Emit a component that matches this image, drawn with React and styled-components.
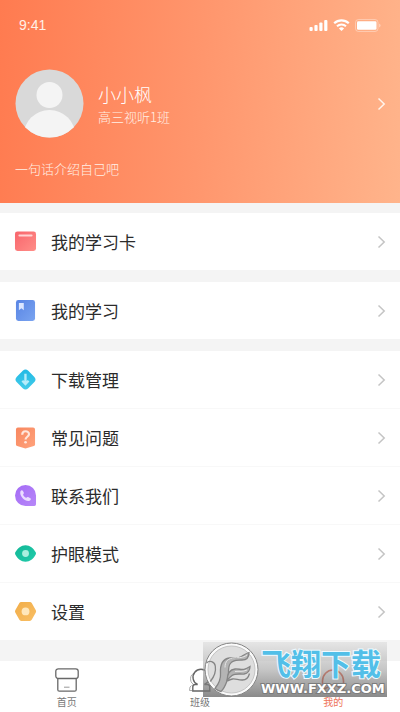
import React from "react";
import styled, { createGlobalStyle, ThemeProvider } from "styled-components";

const theme = {
  palette: {
    page: "#f4f4f4",
    surface: "#ffffff",
    text: "#2b2b2b",
    muted: "#777777",
    divider: "#f8f8f8",
    chevron: "#c4c4c4",
    accent: "#ee7358",
  },
};

const GlobalStyle = createGlobalStyle`
  * {
    box-sizing: border-box;
  }
  body {
    margin: 0;
    background-color: ${theme.palette.page};
    font-family: "Noto Sans CJK SC", sans-serif;
  }
  h1, p, ul {
    margin: 0;
    padding: 0;
  }
`;

const Page = styled.div`
  display: flex;
  flex-direction: column;
  min-height: 100vh;
`;

const Header = styled.header`
  display: flex;
  flex-direction: column;
  padding-bottom: 24px;
  color: #fff0e6;
  background: linear-gradient(94deg, #ff7b50 0%, #ff966d 50%, #ffb48b 100%);
`;

const StatusBar = styled.div`
  display: flex;
  align-items: center;
  justify-content: space-between;
  height: 50px;
  padding: 0 19px;
  font-family: "Liberation Sans", sans-serif;
  font-size: 14px;
`;

const StatusIcons = styled.div`
  display: flex;
  align-items: center;
  gap: 5px;
`;

const Profile = styled.a`
  display: flex;
  align-items: center;
  gap: 14px;
  margin-top: 19px;
  padding: 0 14px 0 15px;
  color: inherit;
  text-decoration: none;
`;

const ProfileText = styled.div`
  flex: 1;
`;

const Name = styled.h1`
  font-size: 18px;
  line-height: 26px;
  font-weight: 300;
  color: #ffffff;
`;

const Small = styled.p`
  font-size: 13px;
  line-height: 20px;
  font-weight: 300;
`;

const Bio = styled(Small)`
  margin-top: 21px;
  padding: 0 15px;
`;

const Main = styled.main`
  display: flex;
  flex: 1;
  flex-direction: column;
  gap: 12px;
  padding: 10px 0 21px;
`;

const Group = styled.ul`
  list-style: none;
  background-color: ${({ theme }) => theme.palette.surface};
`;

const Item = styled.li`
  & + & {
    border-top: 1px solid ${({ theme }) => theme.palette.divider};
  }
`;

const RowLink = styled.a`
  display: flex;
  align-items: center;
  gap: 14px;
  height: 57px;
  padding: 0 14px;
  font-size: 17px;
  line-height: 24px;
  color: ${({ theme }) => theme.palette.text};
  text-decoration: none;
`;

const RowLabel = styled.span`
  flex: 1;
`;

const TabBar = styled.nav`
  position: relative;
  display: flex;
  background-color: ${({ theme }) => theme.palette.surface};
`;

const Tab = styled.a`
  display: flex;
  flex: 1;
  flex-direction: column;
  align-items: center;
  gap: 3px;
  padding: 7px 0 3px;
  font-size: 10px;
  line-height: 14px;
  color: ${({ $active, theme }) =>
    $active ? theme.palette.accent : theme.palette.muted};
  text-decoration: none;
`;

// Download site badge lying over the tab bar
const Badge = styled.div`
  position: absolute;
  right: 13px;
  bottom: 15px;
  display: flex;
  align-items: center;
  width: 184px;
  height: 55px;
  background: linear-gradient(
    180deg,
    rgba(215, 215, 215, 0.5) 0%,
    rgba(160, 160, 160, 0.6) 50%,
    rgba(105, 105, 105, 0.78) 100%
  );
  pointer-events: none;
`;

const BadgeText = styled.div`
  display: flex;
  flex-direction: column;
  white-space: nowrap;
`;

const BadgeTitle = styled.span`
  font-size: 30px;
  line-height: 38px;
  font-weight: 700;
  color: #52bfe8;
  paint-order: stroke fill;
  -webkit-text-stroke: 2px #effaff;
`;

const BadgeUrl = styled.span`
  font-family: "DejaVu Sans", sans-serif;
  font-size: 13px;
  line-height: 16px;
  font-weight: 700;
  color: #ffffff;
  paint-order: stroke fill;
  -webkit-text-stroke: 2px #7c7c7c;
`;

const Chevron = ({ color = theme.palette.chevron }) => (
  <svg width="9" height="14" viewBox="0 0 9 14" fill="none" aria-hidden="true">
    <path d="M1.5 1.5 7.2 7 1.5 12.5" stroke={color} strokeWidth="1.5" />
  </svg>
);

const Avatar = () => (
  <svg width="69" height="69" viewBox="0 0 69 69" role="img" aria-label="头像">
    <defs>
      <clipPath id="avatar">
        <circle cx="34.5" cy="34.5" r="34" />
      </clipPath>
    </defs>
    <circle cx="34.5" cy="34.5" r="34" fill="#d9d9d9" />
    <circle cx="34.5" cy="26" r="13" fill="#f4f4f4" />
    <circle cx="34.5" cy="67" r="26" fill="#f4f4f4" clipPath="url(#avatar)" />
  </svg>
);

const Signal = () => (
  <svg width="19" height="12" viewBox="0 0 19 12" fill="#fff" aria-hidden="true">
    <rect x="0.5" y="8" width="3.2" height="4" rx="1" />
    <rect x="5.4" y="6" width="3.2" height="6" rx="1" />
    <rect x="10.3" y="3.5" width="3.2" height="8.5" rx="1" />
    <rect x="15.2" y="1" width="3.2" height="11" rx="1" />
  </svg>
);

const Wifi = () => (
  <svg width="17" height="12" viewBox="0 0 17 12" fill="none" aria-hidden="true">
    <path d="M1.2 4.3a10.5 10.5 0 0 1 14.6 0" stroke="#fff" strokeWidth="2.2" />
    <path d="M4 7.3a6.5 6.5 0 0 1 9 0" stroke="#fff" strokeWidth="2" />
    <path d="M8.5 12 5.9 9.5a3.8 3.8 0 0 1 5.2 0Z" fill="#fff" />
  </svg>
);

const Battery = () => (
  <svg width="26" height="13" viewBox="0 0 26 13" aria-hidden="true">
    <rect
      x="0.5"
      y="0.5"
      width="22.5"
      height="12"
      rx="3"
      fill="none"
      stroke="#fff"
      strokeOpacity="0.35"
    />
    <rect x="2" y="2.3" width="19.5" height="8.4" rx="1.3" fill="#fff" />
    <path d="M24.2 4.5v4a2.2 2.2 0 0 0 0-4Z" fill="#fff" fillOpacity="0.45" />
  </svg>
);

const icons = {
  card: (
    <>
      <rect x="1" y="1.5" width="21.5" height="20" rx="2.5" fill="url(#red)" />
      <rect x="4.5" y="4.5" width="14.5" height="2.2" rx="1" fill="#ffd3d3" />
    </>
  ),
  book: (
    <>
      <rect x="2" y="1" width="19.5" height="21.5" rx="2.5" fill="url(#blue)" />
      <path d="M5 4h5v7.5L7.5 9.5 5 11.5Z" fill="#dbe6ff" />
    </>
  ),
  download: (
    <>
      <rect
        x="3.5"
        y="3.5"
        width="16.5"
        height="16.5"
        rx="4"
        transform="rotate(45 11.75 11.75)"
        fill="url(#cyan)"
      />
      <path
        d="M11.7 6v10M8.5 13l3.2 3.3 3.2-3.300"
        fill="none"
        stroke="#b5ecfa"
        strokeWidth="2.4"
      />
    </>
  ),
  question: (
    <>
      <path
        d="M4 1.5h15.5a2 2 0 0 1 2 2v15.3q0 1.200-1.200 1.600l-8.600 2.600-8.500-2.600Q2 20 2 18.800V3.500a2 2 0 0 1 2-2Z"
        fill="url(#orange)"
      />
      <path
        d="M8.400 8.900c0-4.700 6.900-4.500 6.900-.5 0 2.600-3.500 2.600-3.500 5.300"
        fill="none"
        stroke="#ffe6dc"
        strokeWidth="2.200"
      />
      <circle cx="11.800" cy="16.600" r="1.400" fill="#ffe6dc" />
    </>
  ),
  phone: (
    <>
      <path
        d="M11.8 1a10.700 10.700 0 0 1 10.700 10.700v9.100q0 1.700-1.700 1.700h-9A10.700 10.700 0 0 1 11.800 1Z"
        fill="url(#purple)"
      />
      <path
        d="M6.600 7.500c.5-1.100 1.800-1.500 2.400-.5l1 1.700c.5 1-.8 1.500-.7 2.400.5 1.400 1.600 2.500 3 3 .9.300 1.500-1.100 2.500-.6l1.900 1.100c1.100.7.400 2-.7 2.400-2.300.8-4.900-.3-6.900-2.300s-3.400-4.800-2.500-7.200Z"
        fill="#eadcff"
      />
    </>
  ),
  eye: (
    <>
      <path
        d="M1.300 10.600C3.700 6.300 7.300 3.200 11.800 3.200s8.100 3.100 10.400 7.400q.6 1.100 0 2.200c-2.300 4.300-5.900 7.400-10.400 7.400s-8.100-3.100-10.500-7.400q-.5-1.100 0-2.200Z"
        fill="url(#green)"
      />
      <circle cx="11.8" cy="11.7" r="3.5" fill="#a9efdf" />
    </>
  ),
  settings: (
    <>
      <path
        d="M7.300 2h9q1.200 0 1.800 1l4.200 7.600q.6 1.100 0 2.200l-4.200 7.500q-.6 1.100-1.800 1.100h-9q-1.200 0-1.800-1.100l-4.200-7.500q-.6-1.100 0-2.200L5.500 3q.6-1 1.800-1Z"
        fill="url(#amber)"
      />
      <circle cx="11.8" cy="11.7" r="4" fill="#ffe7bb" />
    </>
  ),
};

const gradients = [
  ["red", "#f8656c", "#ff8e88"],
  ["blue", "#5884e4", "#7aa4f0"],
  ["cyan", "#1eb8e4", "#46cdea"],
  ["orange", "#f8875f", "#ffa37c"],
  ["purple", "#a46bf6", "#b788f8"],
  ["green", "#11b796", "#22cbab"],
  ["amber", "#f1ad48", "#f9bf65"],
];

const HiddenSvg = styled.svg`
  position: absolute;
`;

const GradientDefs = () => (
  <HiddenSvg width="0" height="0" aria-hidden="true">
    <defs>
      {gradients.map(([id, from, to]) => (
        <linearGradient id={id} key={id} x1="0" y1="0" x2="1" y2="1">
          <stop stopColor={from} />
          <stop offset="1" stopColor={to} />
        </linearGradient>
      ))}
    </defs>
  </HiddenSvg>
);

const HomeIcon = () => (
  <svg width="24" height="24" viewBox="0 0 24 24" fill="none" aria-hidden="true">
    <g stroke="#686868" strokeWidth="1.3">
      <rect x="0.8" y="0.8" width="22.4" height="9.7" rx="2.5" />
      <path d="M2.800 10.500v11.200q0 1.500 1.500 1.500h15.400q1.500 0 1.500-1.500V10.500" />
      <path d="M9 19.200h5.500" strokeWidth="1" stroke="#999" />
    </g>
  </svg>
);

const ClassIcon = () => (
  <svg width="24" height="24" viewBox="0 0 24 24" fill="none" aria-hidden="true">
    <path
      d="M6.500 5.500C1.500 6 1.500 14 5 16M3.500 17.500Q1.500 18 1.500 22.500h2.500"
      stroke="#aaa"
    />
    <g stroke="#666" strokeWidth="1.4">
      <path d="M9.500 16.500a8 8 0 1 1 7 0" />
      <path d="M9.500 16.500H7q-2.200 0-2.200 2.500v4h17v-4q0-2.500-2.200-2.500h-3.100" />
    </g>
  </svg>
);

const MineIcon = () => (
  <svg width="24" height="24" viewBox="0 0 24 24" fill="none" aria-hidden="true">
    <g stroke="#e2482a" strokeWidth="1.600">
      <path d="M1.500 22.500V13a10.500 11 0 0 1 21 0v9.500" />
      <path d="M1.500 22.500c2.500-3 5-1.500 7-5.500h7c2 4 4.500 2.500 7 5.500" />
    </g>
  </svg>
);

const BadgeLogo = () => (
  <svg width="58" height="55" viewBox="0 0 58 55" aria-hidden="true">
    <circle cx="28.500" cy="27.500" r="26.500" fill="#fafafa" stroke="#858585" />
    <circle cx="28.500" cy="27.500" r="23.500" fill="#dedede" stroke="#c4c4c4" />
    <g stroke="#858585" strokeWidth="1.300" fill="#b4b4b4">
      <path d="M46 10.500c0 4-2 7.500-7 7.500-5 .5-9-.5-12 4-3 5 0 11-3 17-1.500 4-3 8-6 10.500-2-.5-4-1.500-6-3 4-5 6-9 5.500-15-.5-8 2-14.500 9-15.500 5-.7 8 .8 12-1.500 2-1.200 4-3 7.500-4Z" />
      <path d="M47 24.500c0 3.500-2 7-6 7.500-4 .3-9-.8-12 1.500-2 1.500-3.500 3-5 5 .3-6 2.500-11 8-11.500 4-.3 6 1 9 .3 2.500-.6 4-1.500 6-2.800Z" />
      <path d="M46.500 31.500c-1 4-3 6.500-7 6.500-4 .2-7-1.500-10-1-2 .3-3.500 1-5 2" fill="none" />
      <path d="M3.500 21c3-3 8-1.500 8.800 3 .8 5-1.300 11-5 15.500" fill="none" />
    </g>
    <path
      d="M44 13c-4 3-8 2.500-12 2.800-7 .3-10 3.500-10 9.700M44 28c-4 2-8 1-12 1.500"
      fill="none"
      stroke="#e6e6e6"
    />
  </svg>
);

const groups = [
  [{ icon: "card", label: "我的学习卡" }],
  [{ icon: "book", label: "我的学习" }],
  [
    { icon: "download", label: "下载管理" },
    { icon: "question", label: "常见问题" },
    { icon: "phone", label: "联系我们" },
    { icon: "eye", label: "护眼模式" },
    { icon: "settings", label: "设置" },
  ],
];

const tabs = [
  { label: "首页", Icon: HomeIcon },
  { label: "班级", Icon: ClassIcon },
  { label: "我的", Icon: MineIcon, active: true },
];

const Row = ({ icon, label }) => (
  <Item>
    <RowLink href="#">
      <svg width="23" height="23" viewBox="0 0 23.5 23.5" aria-hidden="true">
        {icons[icon]}
      </svg>
      <RowLabel>{label}</RowLabel>
      <Chevron />
    </RowLink>
  </Item>
);

const App = () => (
  <ThemeProvider theme={theme}>
    <GlobalStyle />
    <GradientDefs />
    <Page lang="zh-CN">
      <Header>
        <StatusBar>
          <span>9:41</span>
          <StatusIcons>
            <Signal />
            <Wifi />
            <Battery />
          </StatusIcons>
        </StatusBar>
        <Profile href="#">
          <Avatar />
          <ProfileText>
            <Name>小小枫</Name>
            <Small>高三视听1班</Small>
          </ProfileText>
          <Chevron color="#fff4ec" />
        </Profile>
        <Bio>一句话介绍自己吧</Bio>
      </Header>
      <Main>
        {groups.map((items) => (
          <Group key={items[0].icon}>
            {items.map((item) => (
              <Row key={item.icon} {...item} />
            ))}
          </Group>
        ))}
      </Main>
      <TabBar>
        {tabs.map(({ label, Icon, active }) => (
          <Tab
            href="#"
            key={label}
            $active={active}
            aria-current={active ? "page" : undefined}
          >
            <Icon />
            {label}
          </Tab>
        ))}
        <Badge>
          <BadgeLogo />
          <BadgeText>
            <BadgeTitle>飞翔下载</BadgeTitle>
            <BadgeUrl>WWW.FXXZ.COM</BadgeUrl>
          </BadgeText>
        </Badge>
      </TabBar>
    </Page>
  </ThemeProvider>
);

export default App;
